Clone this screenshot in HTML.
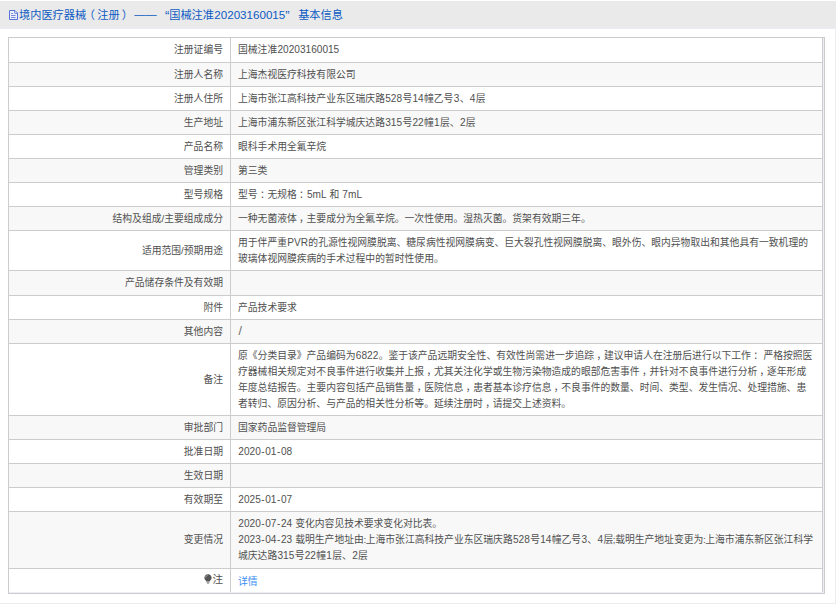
<!DOCTYPE html>
<html lang="zh-CN"><head><meta charset="utf-8"><title>境内医疗器械（注册）</title>
<style>
html,body{margin:0;padding:0;}
body{width:836px;height:606px;overflow:hidden;background:#fff;position:relative;
 font-family:"Liberation Sans","Noto Sans CJK SC",sans-serif;font-size:9.8px;color:#505050;}
.hd{position:absolute;left:0;top:1px;width:836px;height:27px;background:#eaeaea;}
.hl{position:absolute;left:0;top:28px;width:836px;height:1px;background:#e9ecf6;}
.rg{position:absolute;left:835px;top:29px;width:1px;height:575px;background:#ededed;}
.bg{position:absolute;left:0;top:603px;width:836px;height:1px;background:#ededed;}
.tn{font-size:11.6px;margin-left:0.3px;}
.q{font-size:13px;line-height:10px;position:relative;top:1px;}
.n{font-size:10.1px;padding:0 0.3px;}
.h{padding:0 0.55px;}
.p{margin:0 -0.4px;}
.c{position:relative;left:2.3px;}
.ttl{position:absolute;left:19px;top:7px;height:16px;line-height:16px;font-size:11.2px;color:#0d5ac4;white-space:nowrap;}
.ico{position:absolute;left:9px;top:10px;}
.tb{position:absolute;left:8px;top:37px;width:817px;height:557px;background:#ccc;}
.r{position:absolute;left:1px;width:813px;background:#fff;}
.r.e{background:#f8f8f8;}
.l{position:absolute;left:0;top:0;bottom:0;width:221px;}
.v{position:absolute;left:222px;top:0;bottom:0;right:0;}
.r .dv{position:absolute;left:221px;top:0;bottom:0;width:1px;background:#ccc;}
.lt{position:absolute;right:7px;top:50%;margin-top:-8px;height:16px;line-height:16px;white-space:nowrap;}
.vt{position:absolute;left:7px;top:4px;line-height:16px;white-space:nowrap;}
.gap{position:absolute;left:815px;top:1px;width:1px;height:555px;background:#eceef7;}
.gapb{position:absolute;left:1px;top:555px;width:815px;height:1px;background:#eceef7;}
a{color:#3a8ef5;text-decoration:none;}
</style></head>
<body>
<div class="hd"></div><div class="hl"></div><div class="rg"></div><div class="bg"></div>
<svg class="ico" width="9" height="10" viewBox="0 0 9 10"><path d="M0.5 0.5H6L8.5 3V9.5H0.5Z" fill="#eef0fb" stroke="#4566d2" stroke-width="0.9"/><path d="M5.6 0.6V3.4H8.4" fill="none" stroke="#5b78d8" stroke-width="0.8"/><path d="M2 3.5H4M2 5.5H6.6M2 7.5H6.6" stroke="#6f7ed6" stroke-width="0.9"/></svg>
<div class="ttl">境内医疗器械<span style="position:relative;left:-2.5px">（</span>注册<span style="position:relative;left:2px">）</span><span style="margin-left:3.4px;position:relative;top:-1px">——</span><span class="q" style="margin-left:8.2px">“</span>国械注准<span class="tn">20203160015</span><span class="q">”</span><span style="margin-left:8.6px">基本信息</span></div>
<div class="tb">
<div class="r" style="top:1px;height:24px"><div class="l"><div class="lt">注册证编号</div></div><div class="dv"></div><div class="v"><div class="vt">国械注准<span class="n">20203160015</span></div></div></div>
<div class="r e" style="top:26px;height:23px"><div class="l"><div class="lt">注册人名称</div></div><div class="dv"></div><div class="v"><div class="vt">上海杰视医疗科技有限公司</div></div></div>
<div class="r" style="top:50px;height:23px"><div class="l"><div class="lt">注册人住所</div></div><div class="dv"></div><div class="v"><div class="vt">上海市张江高科技产业东区瑞庆路<span class="n">528</span>号<span class="n">14</span>幢乙号<span class="n">3</span>、<span class="n">4</span>层</div></div></div>
<div class="r e" style="top:74px;height:23px"><div class="l"><div class="lt">生产地址</div></div><div class="dv"></div><div class="v"><div class="vt">上海市浦东新区张江科学城庆达路<span class="n">315</span>号<span class="n">22</span>幢<span class="n">1</span>层、<span class="n">2</span>层</div></div></div>
<div class="r" style="top:98px;height:23px"><div class="l"><div class="lt">产品名称</div></div><div class="dv"></div><div class="v"><div class="vt">眼科手术用全氟辛烷</div></div></div>
<div class="r e" style="top:122px;height:23px"><div class="l"><div class="lt">管理类别</div></div><div class="dv"></div><div class="v"><div class="vt">第三类</div></div></div>
<div class="r" style="top:146px;height:23px"><div class="l"><div class="lt">型号规格</div></div><div class="dv"></div><div class="v"><div class="vt">型号<span class="c">：</span>无规格<span class="c">：</span><span class="n">5mL</span> 和 <span class="n">7mL</span></div></div></div>
<div class="r e" style="top:170px;height:23px"><div class="l"><div class="lt">结构及组成/主要组成成分</div></div><div class="dv"></div><div class="v"><div class="vt">一种无菌液体<span class="c">，</span>主要成分为全氟辛烷。一次性使用。湿热灭菌。货架有效期三年。</div></div></div>
<div class="r" style="top:194px;height:39px"><div class="l"><div class="lt">适用范围/预期用途</div></div><div class="dv"></div><div class="v"><div class="vt">用于伴严重<span class="n">PVR</span>的孔源性视网膜脱离、糖尿病性视网膜病变、巨大裂孔性视网膜脱离、眼外伤、眼内异物取出和其他具有一致机理的<br>玻璃体视网膜疾病的手术过程中的暂时性使用。</div></div></div>
<div class="r e" style="top:234px;height:24px"><div class="l"><div class="lt">产品储存条件及有效期</div></div><div class="dv"></div><div class="v"><div class="vt"></div></div></div>
<div class="r" style="top:259px;height:23px"><div class="l"><div class="lt">附件</div></div><div class="dv"></div><div class="v"><div class="vt">产品技术要求</div></div></div>
<div class="r e" style="top:283px;height:23px"><div class="l"><div class="lt">其他内容</div></div><div class="dv"></div><div class="v"><div class="vt"><span style="font-size:12.5px;line-height:10px;position:relative;top:0px;left:0.5px;color:#6a6a6a">/</span></div></div></div>
<div class="r" style="top:307px;height:71px"><div class="l"><div class="lt">备注</div></div><div class="dv"></div><div class="v"><div class="vt">原《分类目录》产品编码为<span class="n">6822</span>。鉴于该产品远期安全性、有效性尚需进一步追踪<span class="c">，</span>建议申请人在注册后进行以下工作<span class="c">：</span> 严格按照医<br>疗器械相关规定对不良事件进行收集并上报<span class="c">，</span>尤其关注化学或生物污染物造成的眼部危害事件<span class="c">，</span>并针对不良事件进行分析<span class="c">，</span>逐年形成<br>年度总结报告。主要内容包括产品销售量<span class="c">，</span>医院信息<span class="c">，</span>患者基本诊疗信息<span class="c">，</span>不良事件的数量、时间、类型、发生情况、处理措施、患<br>者转归、原因分析、与产品的相关性分析等。延续注册时<span class="c">，</span>请提交上述资料。</div></div></div>
<div class="r e" style="top:379px;height:23px"><div class="l"><div class="lt">审批部门</div></div><div class="dv"></div><div class="v"><div class="vt">国家药品监督管理局</div></div></div>
<div class="r" style="top:403px;height:23px"><div class="l"><div class="lt">批准日期</div></div><div class="dv"></div><div class="v"><div class="vt"><span class="n">2020<span class="h">-</span>01<span class="h">-</span>08</span></div></div></div>
<div class="r e" style="top:427px;height:23px"><div class="l"><div class="lt">生效日期</div></div><div class="dv"></div><div class="v"><div class="vt"></div></div></div>
<div class="r" style="top:451px;height:23px"><div class="l"><div class="lt">有效期至</div></div><div class="dv"></div><div class="v"><div class="vt"><span class="n">2025<span class="h">-</span>01<span class="h">-</span>07</span></div></div></div>
<div class="r e" style="top:475px;height:56px"><div class="l"><div class="lt">变更情况</div></div><div class="dv"></div><div class="v"><div class="vt"><span class="n">2020<span class="h">-</span>07<span class="h">-</span>24</span> 变化内容见技术要求变化对比表。<br><span class="n">2023<span class="h">-</span>04<span class="h">-</span>23</span> 载明生产地址由<span class="p">:</span>上海市张江高科技产业东区瑞庆路<span class="n">528</span>号<span class="n">14</span>幢乙号<span class="n">3</span>、<span class="n">4</span>层<span class="p">;</span>载明生产地址变更为<span class="p">:</span>上海市浦东新区张江科学<br>城庆达路<span class="n">315</span>号<span class="n">22</span>幢<span class="n">1</span>层、<span class="n">2</span>层</div></div></div>
<div class="r" style="top:532px;height:23px"><div class="l"><div class="lt" style="margin-top:-10px"><svg width="8" height="10" viewBox="0 0 8 10" style="vertical-align:-1px;margin-right:1px"><path d="M4 0.2C1.9 0.2 0.4 1.8 0.4 3.7C0.4 5 1.2 5.8 1.8 6.6C2.1 7 2.2 7.3 2.2 7.6H5.8C5.8 7.3 5.9 7 6.2 6.6C6.8 5.8 7.6 5 7.6 3.7C7.6 1.8 6.1 0.2 4 0.2Z" fill="#555"/><path d="M1.7 3.5C1.7 2.4 2.6 1.6 3.6 1.5" fill="none" stroke="#c8c8c8" stroke-width="0.7"/><path d="M2.5 8.2H5.5M2.9 9.2H5.1" stroke="#777" stroke-width="0.8"/></svg><span style="font-size:10.5px">注</span></div></div><div class="dv"></div><div class="v"><div class="vt"><a style="position:relative;top:1px">详情</a></div></div></div>
<div class="gap"></div><div class="gapb"></div>
</div>
</body></html>
